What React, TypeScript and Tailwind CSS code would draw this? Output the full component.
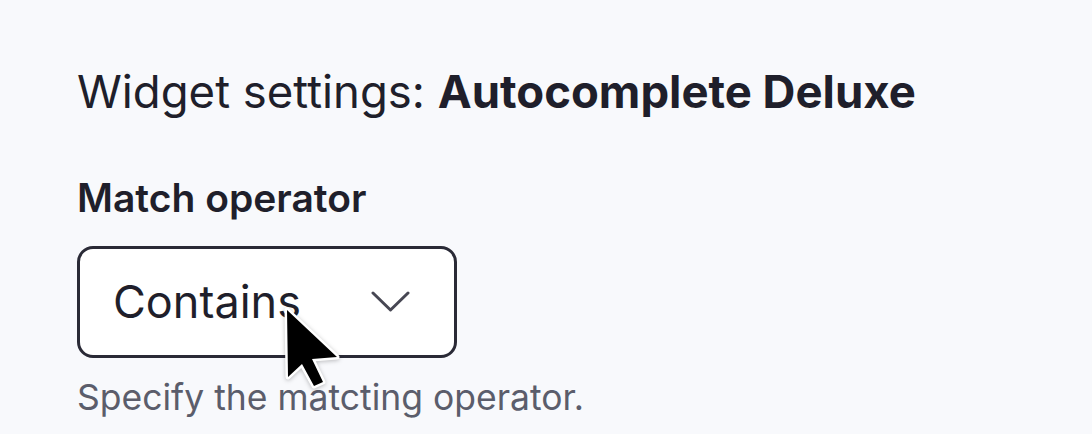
function Cursor() {
  return (
    <svg
      width="64"
      height="88"
      viewBox="0 0 64 88"
      className="pointer-events-none absolute left-[206px] top-[60px] drop-shadow-[0_1px_2px_rgba(0,0,0,0.25)]"
      aria-hidden="true"
    >
      <path
        d="M4 4 L5 71 L19 58 L31 80 L40 76 L29 53 L54 51 Z"
        fill="#000"
        stroke="#fff"
        strokeWidth="5"
        strokeLinejoin="round"
        paintOrder="stroke"
      />
    </svg>
  );
}

function Chevron() {
  return (
    <svg width="39" height="24" viewBox="0 0 39 24" fill="none" aria-hidden="true">
      <path
        d="M2 3 L19.5 20 L37 3"
        stroke="#474753"
        strokeWidth="3"
        strokeLinecap="round"
        strokeLinejoin="round"
      />
    </svg>
  );
}

export default function App() {
  return (
    <div className="h-[434px] w-[1092px] overflow-hidden bg-[#f8f9fc] pl-[77px] pt-[64px] font-['Inter',sans-serif] text-[#1f1f2b]">
      <h1 className="text-[45.5px] leading-[56px] font-normal">
        Widget settings: <span className="font-bold">Autocomplete Deluxe</span>
      </h1>

      <div className="mt-[54px] flex flex-col">
        <label className="text-[39px] leading-[48px] font-semibold">Match operator</label>
        <div className="relative mt-[24px] w-[380px]">
          <div className="flex h-[112px] items-center justify-between rounded-[16px] border-[3px] border-[#2a2a36] bg-white pl-[33px] pr-[44px]">
            <span className="text-[45px]">Contains</span>
            <Chevron />
          </div>
          <Cursor />
        </div>
        <p className="mt-[18px] text-[35.5px] leading-[44px] text-[#5b5d6b]">
          Specify the matcting operator.
        </p>
      </div>
    </div>
  );
}
